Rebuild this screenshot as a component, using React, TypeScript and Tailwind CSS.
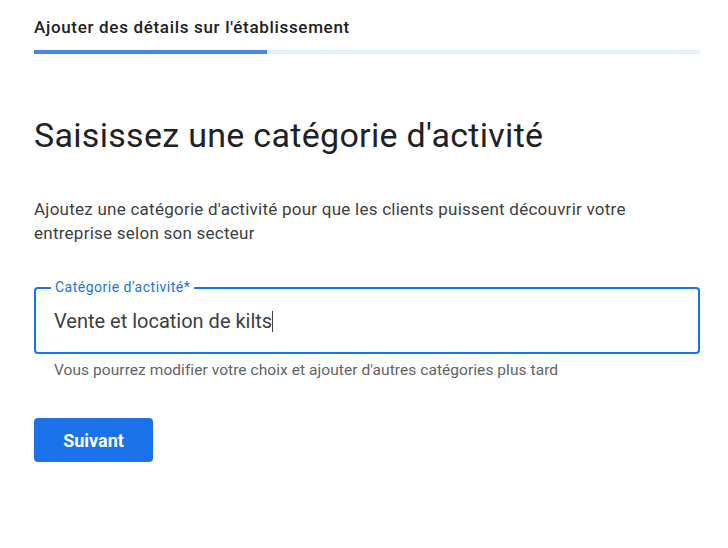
export default function App() {
  return (
    <div className="w-[728px] h-[548px] bg-white font-['Roboto',sans-serif] overflow-hidden">
      <div className="pl-[34px] pr-[28px]">
        <div className="pt-[17px] text-[17px] leading-[20px] font-medium tracking-[0.68px] text-[#202124]">
          Ajouter des détails sur l'établissement
        </div>
        <div className="mt-[13px] h-[4px] bg-[#e8f0fe] flex">
          <div className="w-[233px] h-full bg-[#4a86e8]" />
        </div>
        <h1 className="mt-[61px] text-[34px] leading-[40px] font-normal tracking-[0.3px] text-[#202124]">
          Saisissez une catégorie d'activité
        </h1>
        <p className="mt-[42px] text-[17px] leading-[24px] tracking-[0.25px] text-[#3c4043] w-[620px]">
          Ajoutez une catégorie d'activité pour que les clients puissent découvrir votre entreprise selon son secteur
        </p>
        <div className="relative mt-[42px] h-[67px] border-2 border-[#1a73e8] rounded-[4px] flex items-center px-[18px]">
          <span className="absolute -top-[10px] left-[15px] bg-white px-[4px] text-[14px] leading-[16px] tracking-[0.5px] text-[#1a73e8]">
            Catégorie d'activité*
          </span>
          <span className="text-[20px] leading-[24px] text-[#3c4043]">Vente et location de kilts</span>
          <span className="w-px h-[21px] bg-[#3c4043] mt-[2px]" />
        </div>
        <div className="mt-[6px] pl-[20px] text-[15.5px] leading-[20px] tracking-[0.06px] text-[#5f6368]">
          Vous pourrez modifier votre choix et ajouter d'autres catégories plus tard
        </div>
        <button className="mt-[38px] w-[119px] h-[44px] rounded-[4px] bg-[#1a73e8] text-white text-[18px] font-bold">
          Suivant
        </button>
      </div>
    </div>
  );
}
